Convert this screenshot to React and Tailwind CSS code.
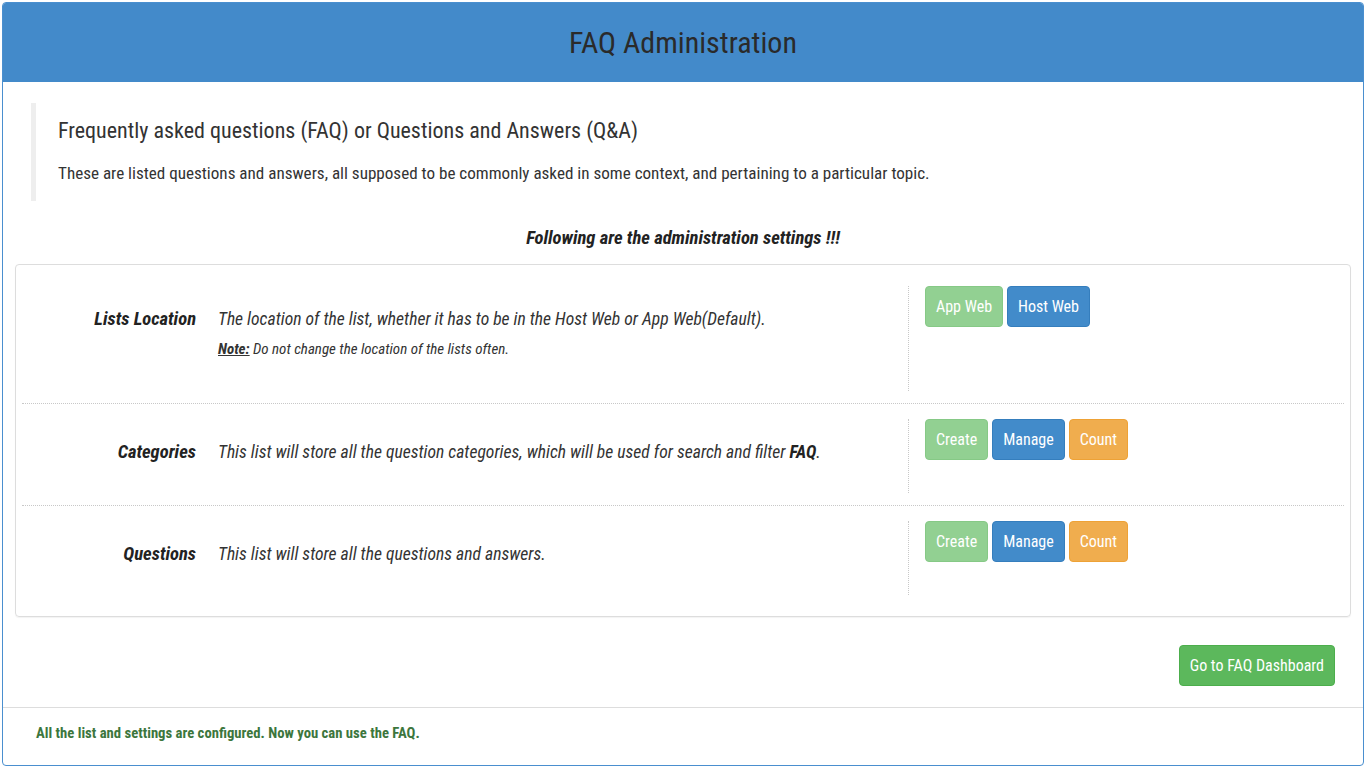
import React from 'react';

const Btn = ({ children, color }) => {
  const colors = {
    lightgreen: 'bg-[#92d092] border-[#86c986]',
    blue: 'bg-[#428bca] border-[#357ebd]',
    orange: 'bg-[#f0ad4e] border-[#eea236]',
    green: 'bg-[#5cb85c] border-[#4cae4c]',
  };
  return (
    <button className={`h-[41px] px-[10px] rounded-[4px] border text-white text-[16px] leading-none ${colors[color]}`}>
      {children}
    </button>
  );
};

const SettingRow = ({ label, children, buttons, tall, last }) => (
  <div className={`grid grid-cols-[174px_1fr_436px] mx-[6px] ${last ? '' : 'border-b border-dotted border-[#c8c8c8]'} pt-[15px] pb-[12px]`}>
    <div className="pt-[23px] text-right font-bold italic text-[18.6px] text-[#222] leading-[20px]">{label}</div>
    <div className="pl-[22px] pt-[23px] italic text-[17.6px] text-[#333] leading-[20px]">{children}</div>
    <div className={`border-l border-dotted border-[#c8c8c8] pl-[16px] flex gap-[4px] items-start ${tall ? 'h-[105px]' : 'h-[74px]'}`}>
      {buttons}
    </div>
  </div>
);

export default function App() {
  return (
    <div className="bg-white w-[1366px] h-[768px] p-[2px] font-['Roboto_Condensed','Liberation_Sans',sans-serif]">
      <div className="h-[764px] border border-[#4a8fcf] rounded-[4px] overflow-hidden flex flex-col">
        <div className="h-[79px] bg-[#438aca] flex items-center justify-center shrink-0">
          <h1 className="text-[30px] text-[#2a2a2a] leading-none">FAQ Administration</h1>
        </div>

        <div className="flex-1 flex flex-col">
          <div className="ml-[28px] mt-[21px] h-[98px] border-l-[5px] border-[#eeeeee] pl-[22px] pt-[14px]">
            <h3 className="text-[22px] text-[#333] leading-[28px]">Frequently asked questions (FAQ) or Questions and Answers (Q&amp;A)</h3>
            <p className="mt-[17px] text-[17.1px] text-[#333] leading-[22px]">
              These are listed questions and answers, all supposed to be commonly asked in some context, and pertaining to a particular topic.
            </p>
          </div>

          <div className="mt-[26px] text-center font-bold italic text-[18.6px] text-[#222] leading-[22px]">
            Following are the administration settings !!!
          </div>

          <div className="mx-[12px] mt-[15px] border border-[#dddddd] rounded-[4px] shadow-[0_1px_1px_rgba(0,0,0,0.05)] pt-[6px] pb-[9px]">
            <SettingRow
              label="Lists Location"
              tall
              buttons={<><Btn color="lightgreen">App Web</Btn><Btn color="blue">Host Web</Btn></>}
            >
              <div>The location of the list, whether it has to be in the Host Web or App Web(Default).</div>
              <div className="mt-[11px] text-[15px] leading-[18px]">
                <span className="font-bold underline">Note:</span> Do not change the location of the lists often.
              </div>
            </SettingRow>
            <SettingRow
              label="Categories"
              buttons={<><Btn color="lightgreen">Create</Btn><Btn color="blue">Manage</Btn><Btn color="orange">Count</Btn></>}
            >
              This list will store all the question categories, which will be used for search and filter <span className="font-bold text-[#222]">FAQ</span>.
            </SettingRow>
            <SettingRow
              label="Questions"
              last
              buttons={<><Btn color="lightgreen">Create</Btn><Btn color="blue">Manage</Btn><Btn color="orange">Count</Btn></>}
            >
              This list will store all the questions and answers.
            </SettingRow>
          </div>

          <div className="flex justify-end mr-[28px] mt-[28px]">
            <Btn color="green">Go to FAQ Dashboard</Btn>
          </div>

          <div className="mt-auto border-t border-[#dddddd] h-[58px] pt-[15px] pl-[33px]">
            <span className="block font-bold text-[14.7px] leading-[20px] text-[#3c763d]">All the list and settings are configured. Now you can use the FAQ.</span>
          </div>
        </div>
      </div>
    </div>
  );
}
